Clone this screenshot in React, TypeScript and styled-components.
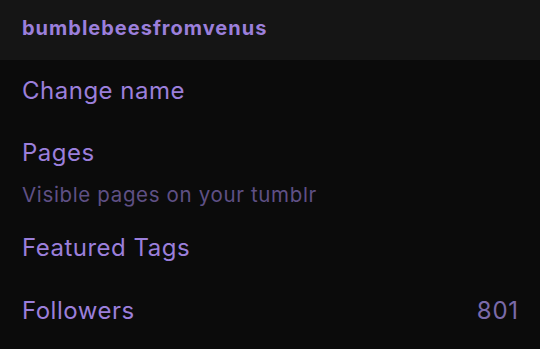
import React from "react";
import styled, { createGlobalStyle } from "styled-components";

const Global = createGlobalStyle`
  html, body { margin: 0; padding: 0; background: #0b0b0b; }
  body { font-family: Inter, "Noto Sans", sans-serif; -webkit-font-smoothing: antialiased; }
`;

const Page = styled.div`
  width: 540px;
  height: 349px;
  background: #0b0b0b;
  overflow: hidden;
  display: flex;
  flex-direction: column;
`;

const Header = styled.div`
  height: 60px;
  background: #151515;
  display: flex;
  align-items: center;
  padding: 0 22px 4px;
  box-sizing: border-box;
`;

const BlogName = styled.div`
  color: #9b7fdb;
  font-size: 20px;
  font-weight: 700;
  letter-spacing: 1px;
`;

const Row = styled.div<{ $h: number }>`
  height: ${(p) => p.$h}px;
  display: flex;
  align-items: center;
  justify-content: space-between;
  padding: 0 22px;
  box-sizing: border-box;
`;

const StackRow = styled.div`
  display: flex;
  flex-direction: column;
  padding: 16px 22px 8px;
  gap: 14px;
`;

const Title = styled.div`
  color: #9b7fdb;
  font-size: 24px;
  line-height: 30px;
  font-weight: 400;
  letter-spacing: 0.5px;
`;

const Sub = styled.div`
  color: #5f5085;
  font-size: 20.5px;
  line-height: 26px;
  letter-spacing: 0.65px;
`;

const Count = styled.div`
  color: #7a6aa9;
  font-size: 24px;
  line-height: 30px;
  letter-spacing: 0.7px;
  margin-right: -0.7px;
`;

export default function App() {
  return (
    <Page>
      <Global />
      <Header>
        <BlogName>bumblebeesfromvenus</BlogName>
      </Header>
      <Row $h={62}>
        <Title>Change name</Title>
      </Row>
      <StackRow>
        <Title>Pages</Title>
        <Sub>Visible pages on your tumblr</Sub>
      </StackRow>
      <Row $h={63}>
        <Title>Featured Tags</Title>
      </Row>
      <Row $h={63}>
        <Title>Followers</Title>
        <Count>801</Count>
      </Row>
    </Page>
  );
}
